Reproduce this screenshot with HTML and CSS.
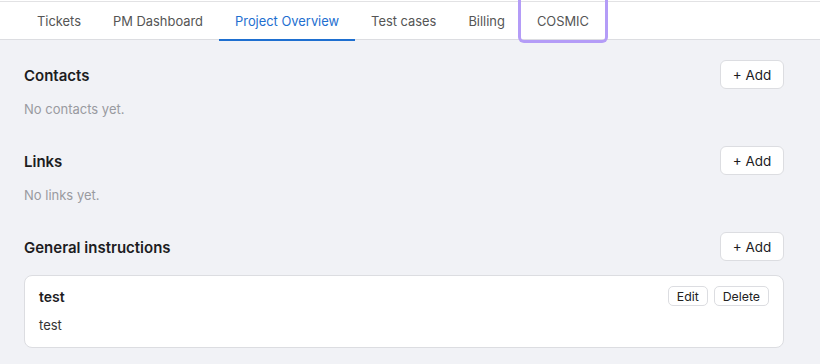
FILE: index.html
```html
<!DOCTYPE html>
<html>
<head>
<meta charset="utf-8">
<link rel="stylesheet" href="styles.css">
</head>
<body>
<div class="top">
  <nav class="tabs">
    <a class="tab">Tickets</a>
    <a class="tab">PM Dashboard</a>
    <a class="tab active">Project Overview</a>
    <a class="tab">Test cases</a>
    <a class="tab">Billing</a>
    <a class="tab focused">COSMIC</a>
  </nav>
</div>
<main class="content">
  <section class="section">
    <div class="section-head">
      <h2>Contacts</h2>
      <button class="btn">+ Add</button>
    </div>
    <p class="empty">No contacts yet.</p>
  </section>
  <section class="section">
    <div class="section-head">
      <h2>Links</h2>
      <button class="btn">+ Add</button>
    </div>
    <p class="empty">No links yet.</p>
  </section>
  <section class="section">
    <div class="section-head">
      <h2>General instructions</h2>
      <button class="btn">+ Add</button>
    </div>
    <div class="card">
      <div class="card-head">
        <h3>test</h3>
        <div class="actions">
          <button class="btn-sm">Edit</button>
          <button class="btn-sm">Delete</button>
        </div>
      </div>
      <p class="card-body">test</p>
    </div>
  </section>
</main>
</body>
</html>
```
FILE: styles.css
```css
* { box-sizing: border-box; }
html, body {
  margin: 0;
  padding: 0;
  background: #f1f2f6;
  font-family: Inter, "Noto Sans", sans-serif;
  color: #1d1d1f;
  height: 364px;
  overflow: hidden;
}
.top {
  background: #fff;
  padding-top: 1px;
}
.tabs {
  display: flex;
  background: #fff;
  border-top: 1px solid #e2e2e4;
  border-bottom: 1px solid #dcdde1;
  padding-left: 21px;
  height: 39px;
}
.tab {
  display: flex;
  align-items: center;
  padding: 1px 16px 0;
  font-size: 12.9px;
  color: #555;
  border-bottom: 2px solid transparent;
  margin-bottom: -1px;
  height: 39px;
}
.tab.active {
  color: #1e6fd0;
  border-bottom-color: #1e6fd0;
}
.tab.focused {
  box-shadow: 0 0 0 3px #b49cf7;
  border-radius: 0 0 3px 3px;
  height: 40px;
  margin-top: -2px;
  padding-top: 3px;
  border-bottom: none;
}
.content {
  padding: 20px 36px 0 24px;
}
.section { margin-bottom: 29px; }
.section-head {
  display: flex;
  justify-content: space-between;
  align-items: center;
  height: 29px;
}
h2 {
  margin: 2px 0 0;
  font-size: 15px;
  font-weight: 600;
  color: #1d1d1f;
}
.btn {
  height: 29px;
  width: 64px;
  background: #fff;
  border: 1px solid #dcdde1;
  border-radius: 6px;
  font-family: inherit;
  font-size: 13.5px;
  color: #1d1d1f;
  padding: 0;
}
.empty {
  margin: 12px 0 0;
  font-size: 13px;
  line-height: 16px;
  color: #999aa0;
}
.card {
  margin-top: 14px;
  background: #fff;
  border: 1px solid #dcdde1;
  border-radius: 8px;
  padding: 10px 14px 13px;
}
.card-head {
  display: flex;
  justify-content: space-between;
  align-items: center;
  height: 20px;
}
h3 {
  margin: 1px 0 0;
  font-size: 14px;
  font-weight: 600;
  color: #1d1d1f;
}
.actions { display: flex; gap: 6px; }
.btn-sm {
  height: 20px;
  padding: 0 8px;
  background: #fff;
  border: 1px solid #dcdde1;
  border-radius: 5px;
  font-family: inherit;
  font-size: 12.3px;
  color: #222;
}
.card-body {
  margin: 10px 0 0;
  font-size: 13px;
  line-height: 18px;
  color: #333;
}
```
